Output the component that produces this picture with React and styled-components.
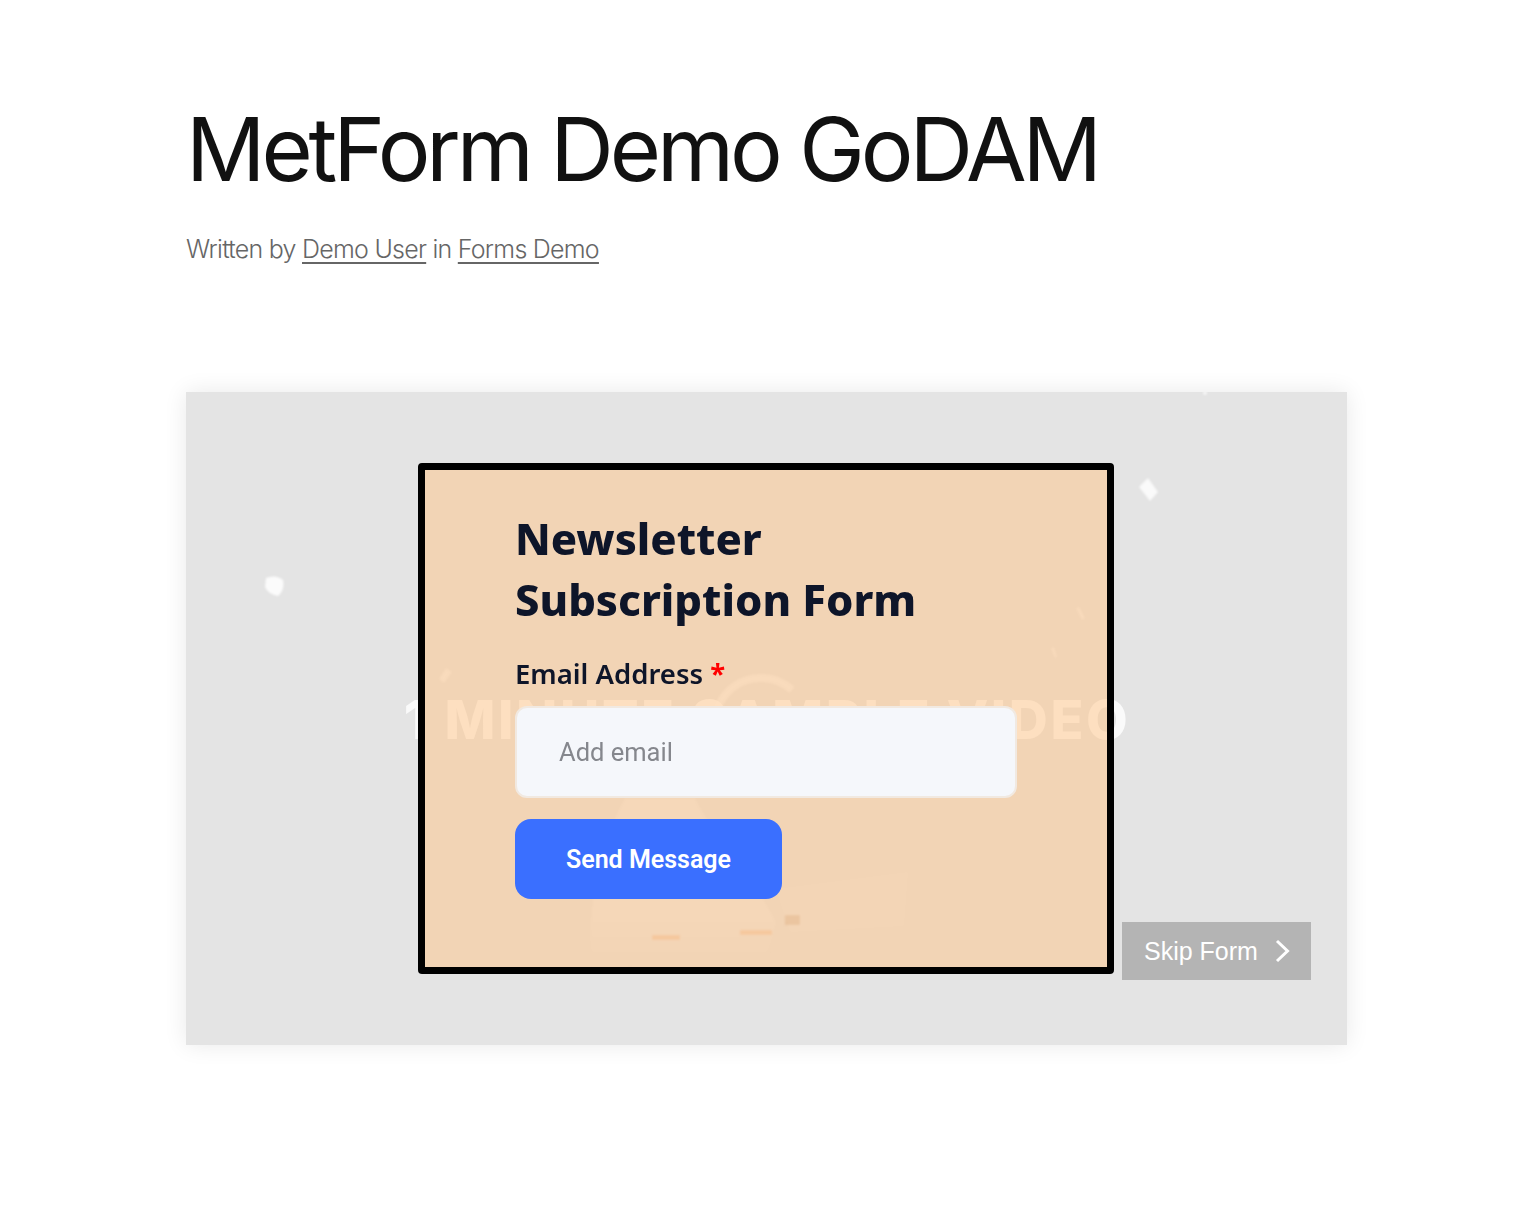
import React from 'react';
import styled, { createGlobalStyle } from 'styled-components';

const GlobalStyle = createGlobalStyle`
  body {
    margin: 0;
    background: #fff;
    font-family: "Inter", "Liberation Sans", sans-serif;
  }
`;

// faint frame of the sample video that sits behind the form
function GhostArt() {
  return (
    <Ghost viewBox="0 0 1161 653" aria-hidden="true">
      <defs>
        <linearGradient id="bell" x1="0" y1="0" x2="0" y2="1">
          <stop offset="0" stopColor="#fff" stopOpacity="0.3" />
          <stop offset="0.7" stopColor="#fff" stopOpacity="0.24" />
          <stop offset="1" stopColor="#fff" stopOpacity="0" />
        </linearGradient>
        <filter id="soft">
          <feGaussianBlur stdDeviation="1" />
        </filter>
      </defs>
      <g filter="url(#soft)">
        <path d="M439 406 L509 406 C525 440 565 480 590 530 L580 570 L405 575 C400 500 420 440 439 406 Z" fill="url(#bell)" />
        <path d="M590 497 L722 480 L718 534 L604 540 Z" fill="#fff" opacity="0.14" />
        <path d="M530 322 A46 46 0 0 1 606 298" fill="none" stroke="#fff" strokeWidth="8" opacity="0.5" />
        <rect x="466" y="543" width="28" height="5" fill="#f0a56f" opacity="0.4" />
        <rect x="554" y="538" width="32" height="5" fill="#f0a56f" opacity="0.4" />
        <rect x="599" y="523" width="15" height="10" fill="#b78a63" opacity="0.35" />
        <path d="M962 86 L972 100 L964 109 L953 95 Z" fill="#fff" opacity="0.8" />
        <path d="M80 186 Q90 182 97 188 Q99 198 92 204 Q82 202 79 195 Z" fill="#fff" opacity="0.85" />
        <path d="M260 276 L266 280 L258 291 L253 287 Z" fill="#fff" opacity="0.5" />
        <path d="M890 216 L893 215 L899 226 L896 228 Z" fill="#fff" opacity="0.5" />
        <path d="M865 256 L868 255 L871 265 L869 266 Z" fill="#fff" opacity="0.5" />
        <circle cx="1019" cy="1" r="2" fill="#fff" opacity="0.7" />
      </g>
    </Ghost>
  );
}

function ChevronIcon() {
  return (
    <Chevron viewBox="0 0 16 24" aria-hidden="true">
      <path d="M3 2 L13.5 12 L3 22" fill="none" stroke="#fff" strokeWidth="3" />
    </Chevron>
  );
}

export default function App() {
  return (
    <Page>
      <GlobalStyle />
      <Header>
        <Title>MetForm Demo GoDAM</Title>
        <Meta>
          Written by <MetaLink href="#">Demo User</MetaLink> in <MetaLink href="#">Forms Demo</MetaLink>
        </Meta>
      </Header>
      <Stage>
        <GhostArt />
        <Watermark>1 MINUTE SAMPLE VIDEO</Watermark>
        <FormCard>
          <FormTitle>
            Newsletter
            <br />
            Subscription Form
          </FormTitle>
          <Label htmlFor="email">
            Email Address <Required>*</Required>
          </Label>
          <EmailInput id="email" type="email" placeholder="Add email" />
          <SendButton type="button">Send Message</SendButton>
        </FormCard>
        <SkipButton type="button">
          Skip Form
          <ChevronIcon />
        </SkipButton>
      </Stage>
    </Page>
  );
}

const Page = styled.main`
  min-height: 1212px;
  box-sizing: border-box;
  padding: 96px 187px 0 186px;
`;

const Header = styled.header`
  display: flex;
  flex-direction: column;
  gap: 31px;
  margin-bottom: 127px;
`;

const Title = styled.h1`
  margin: 0;
  font-family: "Inter", "Liberation Sans", sans-serif;
  font-size: 88px;
  line-height: 106px;
  font-weight: 400;
  letter-spacing: -4.1px;
  color: #111;
`;

const Meta = styled.p`
  margin: 0;
  font-size: 25px;
  line-height: 32px;
  font-weight: 300;
  letter-spacing: -0.75px;
  color: #666;
`;

const MetaLink = styled.a`
  color: #666;
  text-decoration: underline;
  text-underline-offset: 4px;
  text-decoration-thickness: 1.5px;
`;

const Stage = styled.section`
  position: relative;
  height: 653px;
  padding-right: 1px;
  display: grid;
  place-items: center;
  background: #e4e4e4;
  box-shadow: 0 0 22px rgba(0, 0, 0, 0.09);
`;

const Ghost = styled.svg`
  position: absolute;
  inset: 0;
  width: 100%;
  height: 100%;
`;

const Watermark = styled.div`
  position: absolute;
  left: 219px;
  top: 298px;
  width: 724px;
  display: flex;
  justify-content: center;
  white-space: nowrap;
  font-family: "Inter", "Liberation Sans", sans-serif;
  font-size: 54px;
  line-height: 60px;
  font-weight: 800;
  letter-spacing: 2.6px;
  color: rgba(255, 255, 255, 0.8);
`;

const FormCard = styled.div`
  position: relative;
  box-sizing: border-box;
  width: 696px;
  height: 511px;
  padding: 38px 90px 0;
  display: flex;
  flex-direction: column;
  align-items: flex-start;
  border: 7px solid #000;
  border-radius: 4px;
  background: rgba(255, 196, 134, 0.5);
`;

const FormTitle = styled.h2`
  margin: 0 0 25px;
  font-family: "Noto Sans", sans-serif;
  font-size: 43.5px;
  line-height: 61px;
  font-weight: 800;
  color: #0e1529;
`;

const Label = styled.label`
  display: block;
  margin-bottom: 13px;
  font-family: "Noto Sans", sans-serif;
  font-size: 27.5px;
  line-height: 38px;
  font-weight: 600;
  color: #0e1529;
`;

const Required = styled.span`
  color: #f00;
  font-weight: 700;
`;

const EmailInput = styled.input`
  box-sizing: border-box;
  width: 502px;
  height: 92px;
  margin-bottom: 21px;
  padding: 0 42px;
  border: 2px solid #f1e9e1;
  border-radius: 12px;
  outline: none;
  background: #f5f7fb;
  font-family: "Roboto", sans-serif;
  font-size: 25.5px;
  color: #111;

  &::placeholder {
    color: #85878d;
    opacity: 1;
  }
`;

const SendButton = styled.button`
  width: 267px;
  height: 80px;
  padding: 0;
  border: none;
  border-radius: 16px;
  background: #3a6fff;
  font-family: "Roboto", sans-serif;
  font-size: 25px;
  font-weight: 600;
  color: #fff;
`;

const SkipButton = styled.button`
  position: absolute;
  right: 36px;
  bottom: 65px;
  width: 189px;
  height: 58px;
  padding: 0 0 0 22px;
  display: flex;
  align-items: center;
  gap: 16px;
  border: none;
  background: #b4b4b4;
  font-family: "Liberation Sans", sans-serif;
  font-size: 25px;
  color: #fff;
`;

const Chevron = styled.svg`
  width: 16px;
  height: 24px;
`;
